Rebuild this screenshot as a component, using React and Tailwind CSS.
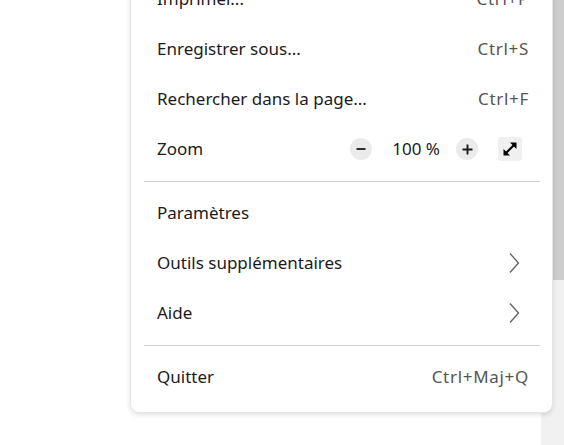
// Single menu row: label on the left, shortcut or chevron on the right
function MenuRow({ label, shortcut, submenu }) {
  return (
    <div className="flex h-[50px] items-center justify-between pl-[26px] pr-[23px]">
      <span className="text-[#1b1b1b]">{label}</span>
      {shortcut && (
        <span className="text-[17px] tracking-[0.7px] text-[#555555]">{shortcut}</span>
      )}
      {submenu && (
        <svg className="mr-[9px]" width="11" height="22" viewBox="0 0 11 22">
          <path d="M1 1.5l8.5 9.5L1 20.5" fill="none" stroke="#606060" strokeWidth="1.3" />
        </svg>
      )}
    </div>
  );
}

function Separator() {
  return <div className="mb-[6px] ml-[13px] mr-[12px] mt-[7px] h-px bg-[#d2d2d2]" />;
}

function ZoomRow() {
  return (
    <div className="flex h-[50px] items-center justify-between pl-[26px] pr-[30px]">
      <span className="text-[#1b1b1b]">Zoom</span>
      <div className="flex items-center">
        <button className="flex h-[22px] w-[22px] items-center justify-center rounded-full bg-[#ebebeb]">
          <svg width="12" height="12" viewBox="0 0 12 12">
            <path d="M1.5 6h9" stroke="#1b1b1b" strokeWidth="1.8" />
          </svg>
        </button>
        <span className="ml-[20px] mr-[16px] text-[#1b1b1b]">100 %</span>
        <button className="flex h-[22px] w-[22px] items-center justify-center rounded-full bg-[#ebebeb]">
          <svg width="13" height="13" viewBox="0 0 13 13">
            <path d="M1.5 6.5h10M6.5 1.5v10" stroke="#1b1b1b" strokeWidth="1.9" />
          </svg>
        </button>
        <button className="ml-[20px] flex h-[24px] w-[24px] items-center justify-center rounded-[3px] bg-[#f0f0f0]">
          <svg width="18" height="18" viewBox="0 0 18 18">
            <path d="M4 14L14 4" stroke="#000" strokeWidth="2.2" />
            <path d="M9 2.5h6.5V9z" fill="#000" />
            <path d="M2.5 9v6.5H9z" fill="#000" />
          </svg>
        </button>
      </div>
    </div>
  );
}

export default function App() {
  return (
    <div
      className="relative h-[445px] w-[564px] overflow-hidden bg-white text-[17px]"
      style={{ fontFamily: '"Noto Sans", "Open Sans", sans-serif' }}
    >
      {/* page scrollbar behind the menu */}
      <div className="absolute right-0 top-0 flex h-full w-[23px] justify-end bg-[#f1f1f1]">
        <div className="h-[280px] w-[11px] bg-[#cdcdcd]" />
      </div>

      <div className="relative z-10 ml-[130px] mt-[-27px] w-[423px] rounded-[9px] border border-[#e6e6e6] bg-white pb-[10px] shadow-[0_2px_5px_rgba(0,0,0,0.12)]">
        <MenuRow label="Imprimer..." shortcut="Ctrl+P" />
        <MenuRow label="Enregistrer sous..." shortcut="Ctrl+S" />
        <MenuRow label="Rechercher dans la page..." shortcut="Ctrl+F" />
        <ZoomRow />
        <Separator />
        <MenuRow label="Paramètres" />
        <MenuRow label="Outils supplémentaires" submenu />
        <MenuRow label="Aide" submenu />
        <Separator />
        <MenuRow label="Quitter" shortcut="Ctrl+Maj+Q" />
      </div>
    </div>
  );
}
